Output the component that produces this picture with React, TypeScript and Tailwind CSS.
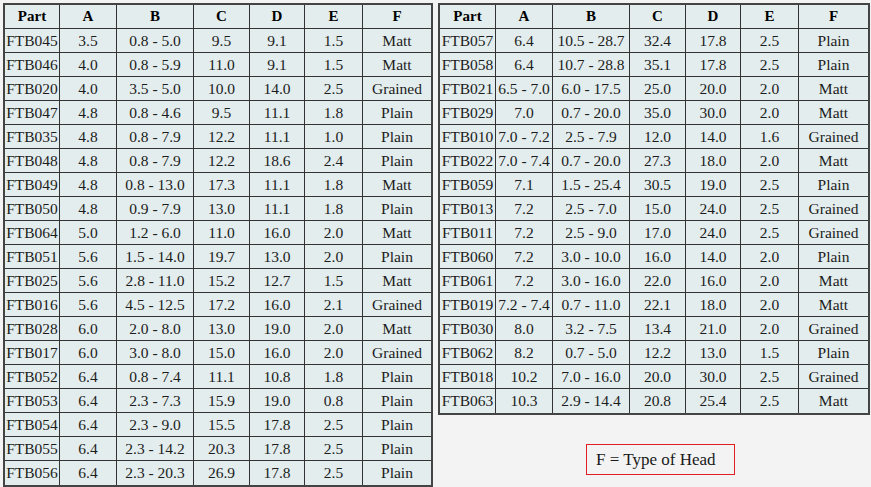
const headers = ['Part', 'A', 'B', 'C', 'D', 'E', 'F']

type Row = [string, string, string, string, string, string, string]

const leftRows: Row[] = [
  ['FTB045', '3.5', '0.8 - 5.0', '9.5', '9.1', '1.5', 'Matt'],
  ['FTB046', '4.0', '0.8 - 5.9', '11.0', '9.1', '1.5', 'Matt'],
  ['FTB020', '4.0', '3.5 - 5.0', '10.0', '14.0', '2.5', 'Grained'],
  ['FTB047', '4.8', '0.8 - 4.6', '9.5', '11.1', '1.8', 'Plain'],
  ['FTB035', '4.8', '0.8 - 7.9', '12.2', '11.1', '1.0', 'Plain'],
  ['FTB048', '4.8', '0.8 - 7.9', '12.2', '18.6', '2.4', 'Plain'],
  ['FTB049', '4.8', '0.8 - 13.0', '17.3', '11.1', '1.8', 'Matt'],
  ['FTB050', '4.8', '0.9 - 7.9', '13.0', '11.1', '1.8', 'Plain'],
  ['FTB064', '5.0', '1.2 - 6.0', '11.0', '16.0', '2.0', 'Matt'],
  ['FTB051', '5.6', '1.5 - 14.0', '19.7', '13.0', '2.0', 'Plain'],
  ['FTB025', '5.6', '2.8 - 11.0', '15.2', '12.7', '1.5', 'Matt'],
  ['FTB016', '5.6', '4.5 - 12.5', '17.2', '16.0', '2.1', 'Grained'],
  ['FTB028', '6.0', '2.0 - 8.0', '13.0', '19.0', '2.0', 'Matt'],
  ['FTB017', '6.0', '3.0 - 8.0', '15.0', '16.0', '2.0', 'Grained'],
  ['FTB052', '6.4', '0.8 - 7.4', '11.1', '10.8', '1.8', 'Plain'],
  ['FTB053', '6.4', '2.3 - 7.3', '15.9', '19.0', '0.8', 'Plain'],
  ['FTB054', '6.4', '2.3 - 9.0', '15.5', '17.8', '2.5', 'Plain'],
  ['FTB055', '6.4', '2.3 - 14.2', '20.3', '17.8', '2.5', 'Plain'],
  ['FTB056', '6.4', '2.3 - 20.3', '26.9', '17.8', '2.5', 'Plain'],
]

const rightRows: Row[] = [
  ['FTB057', '6.4', '10.5 - 28.7', '32.4', '17.8', '2.5', 'Plain'],
  ['FTB058', '6.4', '10.7 - 28.8', '35.1', '17.8', '2.5', 'Plain'],
  ['FTB021', '6.5 - 7.0', '6.0 - 17.5', '25.0', '20.0', '2.0', 'Matt'],
  ['FTB029', '7.0', '0.7 - 20.0', '35.0', '30.0', '2.0', 'Matt'],
  ['FTB010', '7.0 - 7.2', '2.5 - 7.9', '12.0', '14.0', '1.6', 'Grained'],
  ['FTB022', '7.0 - 7.4', '0.7 - 20.0', '27.3', '18.0', '2.0', 'Matt'],
  ['FTB059', '7.1', '1.5 - 25.4', '30.5', '19.0', '2.5', 'Plain'],
  ['FTB013', '7.2', '2.5 - 7.0', '15.0', '24.0', '2.5', 'Grained'],
  ['FTB011', '7.2', '2.5 - 9.0', '17.0', '24.0', '2.5', 'Grained'],
  ['FTB060', '7.2', '3.0 - 10.0', '16.0', '14.0', '2.0', 'Plain'],
  ['FTB061', '7.2', '3.0 - 16.0', '22.0', '16.0', '2.0', 'Matt'],
  ['FTB019', '7.2 - 7.4', '0.7 - 11.0', '22.1', '18.0', '2.0', 'Matt'],
  ['FTB030', '8.0', '3.2 - 7.5', '13.4', '21.0', '2.0', 'Grained'],
  ['FTB062', '8.2', '0.7 - 5.0', '12.2', '13.0', '1.5', 'Plain'],
  ['FTB018', '10.2', '7.0 - 16.0', '20.0', '30.0', '2.5', 'Grained'],
  ['FTB063', '10.3', '2.9 - 14.4', '20.8', '25.4', '2.5', 'Matt'],
]

function PartTable({ rows, cols }: { rows: Row[]; cols: string }) {
  const all: Row[] = [headers as Row, ...rows]
  return (
    <div className="border-2 border-[#444] bg-[#e3eded]">
      <div className={`grid ${cols}`}>
        {all.map((row, r) =>
          row.map((cell, c) => {
            const lastCol = c === 6
            const lastRow = r === all.length - 1
            const isHead = r === 0
            return (
              <div
                key={`${r}-${c}`}
                className={`flex h-[24px] items-center justify-center whitespace-nowrap border-[#333] leading-none ${
                  lastCol ? '' : 'border-r'
                } ${lastRow ? '' : 'border-b'} ${
                  isHead ? 'text-[15px] font-bold text-black' : 'text-[15.5px] text-[#1c1c1c]'
                }`}
              >
                {cell}
              </div>
            )
          }),
        )}
      </div>
    </div>
  )
}

export default function App() {
  return (
    <div
      className="flex h-[487px] w-[871px] gap-[5px] bg-[#f3f3f3] pl-[3px] pt-[3px]"
      style={{ fontFamily: '"Liberation Serif", "Times New Roman", serif' }}
    >
      <div className="w-[430px] shrink-0">
        <PartTable rows={leftRows} cols="grid-cols-[55px_57px_77px_56px_55px_58px_68px]" />
      </div>
      <div className="flex w-[432px] shrink-0 flex-col">
        <PartTable rows={rightRows} cols="grid-cols-[56px_57px_77px_56px_55px_58px_69px]" />
        <div className="ml-[148px] mt-[29px] flex h-[31px] w-[149px] items-center border border-[#e02020] pl-[9px] text-[17px] text-[#1a1a1a]">
          F = Type of Head
        </div>
      </div>
    </div>
  )
}
